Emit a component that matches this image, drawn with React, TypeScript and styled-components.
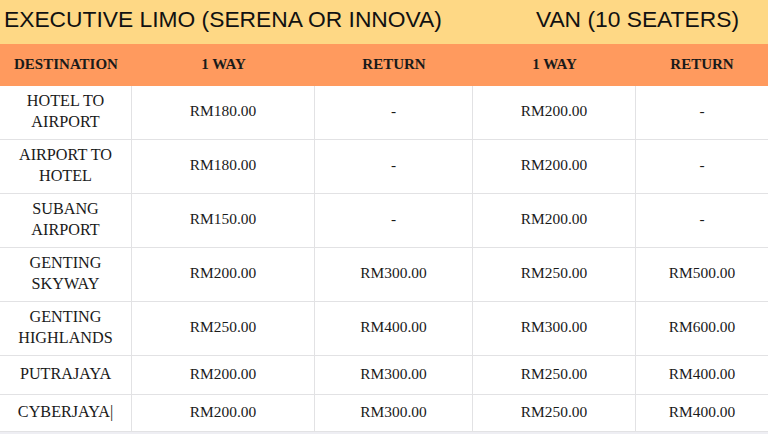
import React from "react";
import styled, { createGlobalStyle } from "styled-components";

const Global = createGlobalStyle`
  html, body { margin: 0; padding: 0; background: #eeeef3; }
  * { box-sizing: border-box; }
`;

const Page = styled.div`
  width: 768px;
  background: #ffffff;
`;

const TitleBar = styled.div`
  height: 44px;
  background: #fed885;
  display: flex;
  justify-content: space-between;
  align-items: flex-start;
  padding: 7.5px 29px 0 4px;
`;

const Title = styled.div`
  font-family: "Liberation Sans", Arial, sans-serif;
  font-size: 22.8px;
  line-height: 22.8px;
  color: #111111;
  white-space: nowrap;
`;

const Grid = styled.div`
  display: grid;
  grid-template-columns: 132px 183px 158px 163px 132px;
  grid-template-rows: 42px 54px 54px 54px 54px 54px 39px 37px;
`;

const HeadCell = styled.div`
  background: #ff9a5e;
  display: flex;
  align-items: center;
  justify-content: center;
  padding-bottom: 2px;
  font-family: "Liberation Serif", "Times New Roman", serif;
  font-weight: 700;
  font-size: 15px;
  color: #1a1a1a;
`;

const Cell = styled.div<{ $last: boolean; $label: boolean }>`
  display: flex;
  align-items: center;
  justify-content: center;
  text-align: center;
  padding-bottom: 2px;
  border-bottom: 1px solid #e2e2e4;
  border-right: ${(p) => (p.$last ? "none" : "1px solid #e2e2e4")};
  font-family: "Liberation Serif", "Times New Roman", serif;
  font-size: ${(p) => (p.$label ? "16.2px" : "15.4px")};
  line-height: 20.3px;
  color: #1a1a1a;
`;

const headers = ["DESTINATION", "1 WAY", "RETURN", "1 WAY", "RETURN"];

const rows: string[][] = [
  ["HOTEL TO\nAIRPORT", "RM180.00", "-", "RM200.00", "-"],
  ["AIRPORT TO\nHOTEL", "RM180.00", "-", "RM200.00", "-"],
  ["SUBANG\nAIRPORT", "RM150.00", "-", "RM200.00", "-"],
  ["GENTING\nSKYWAY", "RM200.00", "RM300.00", "RM250.00", "RM500.00"],
  ["GENTING\nHIGHLANDS", "RM250.00", "RM400.00", "RM300.00", "RM600.00"],
  ["PUTRAJAYA", "RM200.00", "RM300.00", "RM250.00", "RM400.00"],
  ["CYBERJAYA|", "RM200.00", "RM300.00", "RM250.00", "RM400.00"],
];

export default function App() {
  return (
    <>
      <Global />
      <Page>
        <TitleBar>
          <Title>EXECUTIVE LIMO (SERENA OR INNOVA)</Title>
          <Title>VAN (10 SEATERS)</Title>
        </TitleBar>
        <Grid>
          {headers.map((h, i) => (
            <HeadCell key={"h" + i}>{h}</HeadCell>
          ))}
          {rows.map((r, ri) =>
            r.map((c, ci) => (
              <Cell
                key={ri + "-" + ci}
                $last={ci === r.length - 1}
                $label={ci === 0 || /[A-Z]{3}/.test(c.replace("RM", ""))}
              >
                <span>
                  {c.split("\n").map((line, li) => (
                    <React.Fragment key={li}>
                      {li > 0 && <br />}
                      {line}
                    </React.Fragment>
                  ))}
                </span>
              </Cell>
            ))
          )}
        </Grid>
      </Page>
    </>
  );
}
